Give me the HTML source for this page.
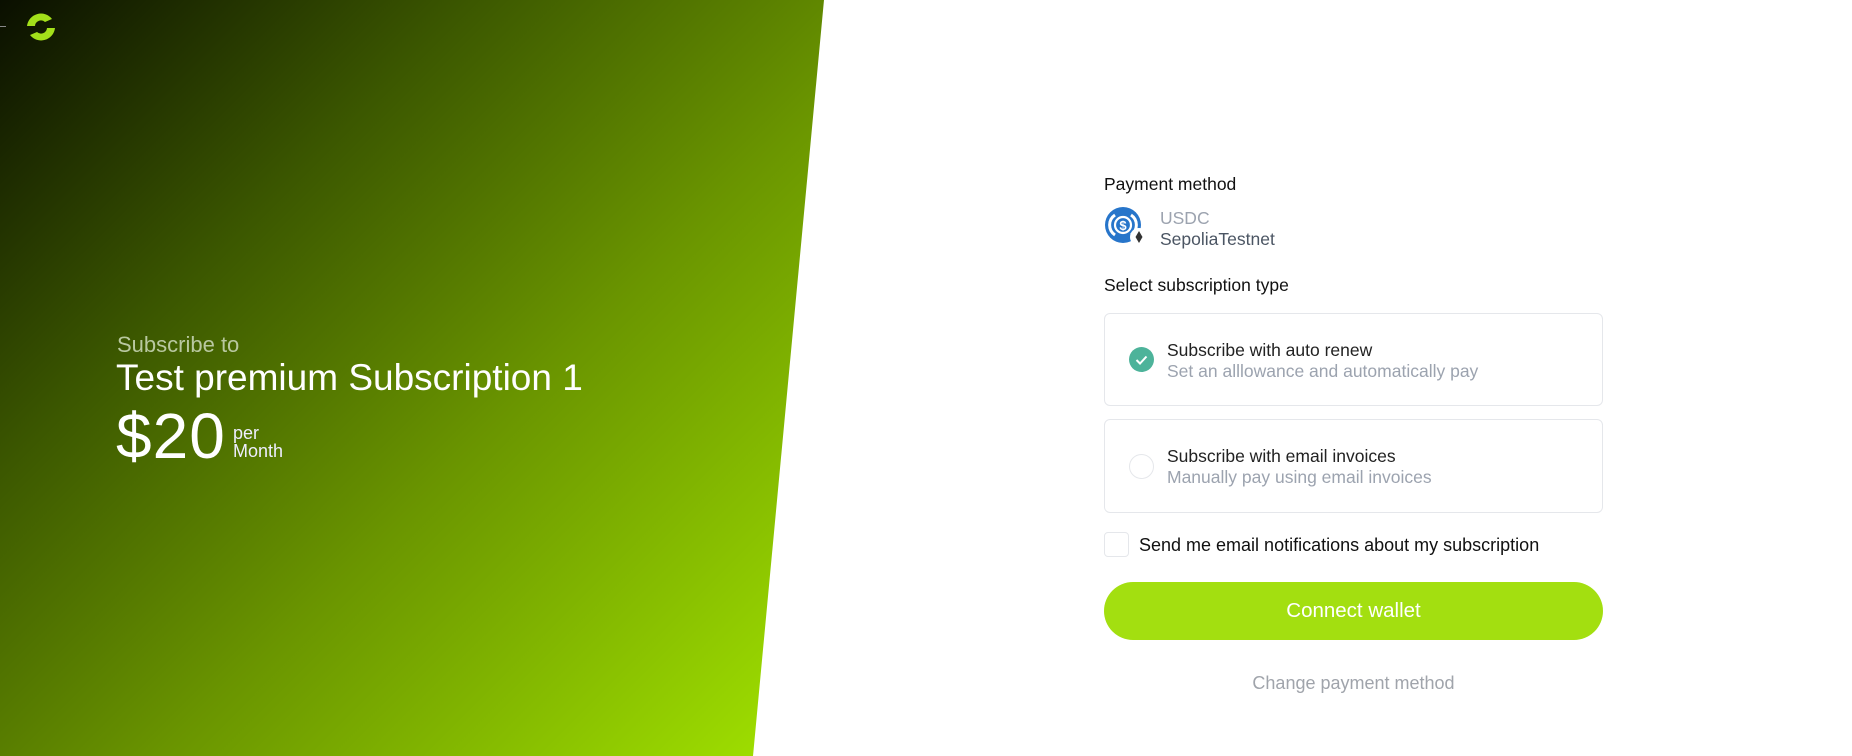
<!DOCTYPE html>
<html><head><meta charset="utf-8"><style>
*{margin:0;padding:0;box-sizing:border-box}
body{width:1852px;height:756px;overflow:hidden;background:#fff;font-family:"Liberation Sans",sans-serif;position:relative}
.bg{position:absolute;left:0;top:0;width:830px;height:756px;clip-path:polygon(0 0,824px 0,753px 756px,0 756px);
background:linear-gradient(135deg,#0a0f00 0%,#3c5800 30%,#6a9500 58%,#a4e600 100%)}
.a{position:absolute;white-space:nowrap}
.card{position:absolute;left:1104px;width:499px;height:93px;border:1px solid #e5e7eb;border-radius:6px}
</style></head><body>
<div class="bg"></div>
<div class="a" style="left:0;top:26px;width:6px;height:1px;background:#888"></div>
<svg class="a" style="left:24px;top:11px" width="34" height="32" viewBox="0 0 34 32">
<path d="M28 8 A14 14 0 0 0 3 15 L11 15 A6 6 0 0 1 21 11 Z" fill="#a3e01a"/>
<path d="M6 24 A14 14 0 0 0 31 17 L23 17 A6 6 0 0 1 13 21 Z" fill="#a3e01a"/>
</svg>
<div class="a" style="left:117px;top:332px;font-size:22px;color:#b9c8a0;font-weight:300">Subscribe to</div>
<div class="a" style="left:116px;top:357px;font-size:37px;color:#fff">Test premium Subscription 1</div>
<div class="a" style="left:116px;top:399px;font-size:64px;color:#fff;font-weight:300;letter-spacing:1px">$20</div>
<div class="a" style="left:233px;top:424px;font-size:18px;color:#eef;line-height:18px">per<br>Month</div>

<div class="a" style="left:1104px;top:174px;font-size:17.5px;color:#111">Payment method</div>
<svg class="a" style="left:1104px;top:207px" width="46" height="42" viewBox="0 0 46 42">
<circle cx="19" cy="18" r="18" fill="#2775ca"/>
<path d="M11 8 A12 12 0 0 0 11 28" stroke="#fff" stroke-width="3" fill="none"/>
<path d="M27 8 A12 12 0 0 1 27 28" stroke="#fff" stroke-width="3" fill="none"/>
<circle cx="19" cy="18" r="8" fill="none" stroke="#fff" stroke-width="2.2"/>
<text x="19" y="23" font-size="13" font-weight="bold" fill="#fff" text-anchor="middle" font-family="Liberation Sans">$</text>
<circle cx="35" cy="30" r="9" fill="#fff"/>
<path d="M35 24 L38.5 30 L35 36 L31.5 30 Z" fill="#333"/>
</svg>
<div class="a" style="left:1160px;top:208px;font-size:17.5px;color:#9ca3af">USDC</div>
<div class="a" style="left:1160px;top:229px;font-size:17.5px;color:#4b5563">SepoliaTestnet</div>
<div class="a" style="left:1104px;top:275px;font-size:17.5px;color:#111">Select subscription type</div>

<div class="card" style="top:313px"></div>
<svg class="a" style="left:1129px;top:347px" width="25" height="25"><circle cx="12.5" cy="12.5" r="12.5" fill="#4db39a"/><path d="M7.5 13 L11 16.5 L17.5 9.5" stroke="#fff" stroke-width="2" fill="none"/></svg>
<div class="a" style="left:1167px;top:340px;font-size:17.5px;color:#222">Subscribe with auto renew</div>
<div class="a" style="left:1167px;top:361px;font-size:17.5px;color:#9ca3af">Set an alllowance and automatically pay</div>

<div class="card" style="top:419px;height:94px"></div>
<div class="a" style="left:1129px;top:454px;width:25px;height:25px;border:1px solid #e5e7eb;border-radius:50%"></div>
<div class="a" style="left:1167px;top:446px;font-size:17.5px;color:#222">Subscribe with email invoices</div>
<div class="a" style="left:1167px;top:467px;font-size:17.5px;color:#9ca3af">Manually pay using email invoices</div>

<div class="a" style="left:1104px;top:532px;width:25px;height:25px;border:1px solid #e5e7eb;border-radius:4px"></div>
<div class="a" style="left:1139px;top:535px;font-size:18px;color:#111">Send me email notifications about my subscription</div>

<div class="a" style="left:1104px;top:582px;width:499px;height:58px;border-radius:29px;background:#a3df10;color:#fff;font-size:20.5px;text-align:center;line-height:58px">Connect wallet</div>
<div class="a" style="left:1104px;top:673px;width:499px;text-align:center;font-size:18px;color:#a0a4ab">Change payment method</div>
</body></html>
